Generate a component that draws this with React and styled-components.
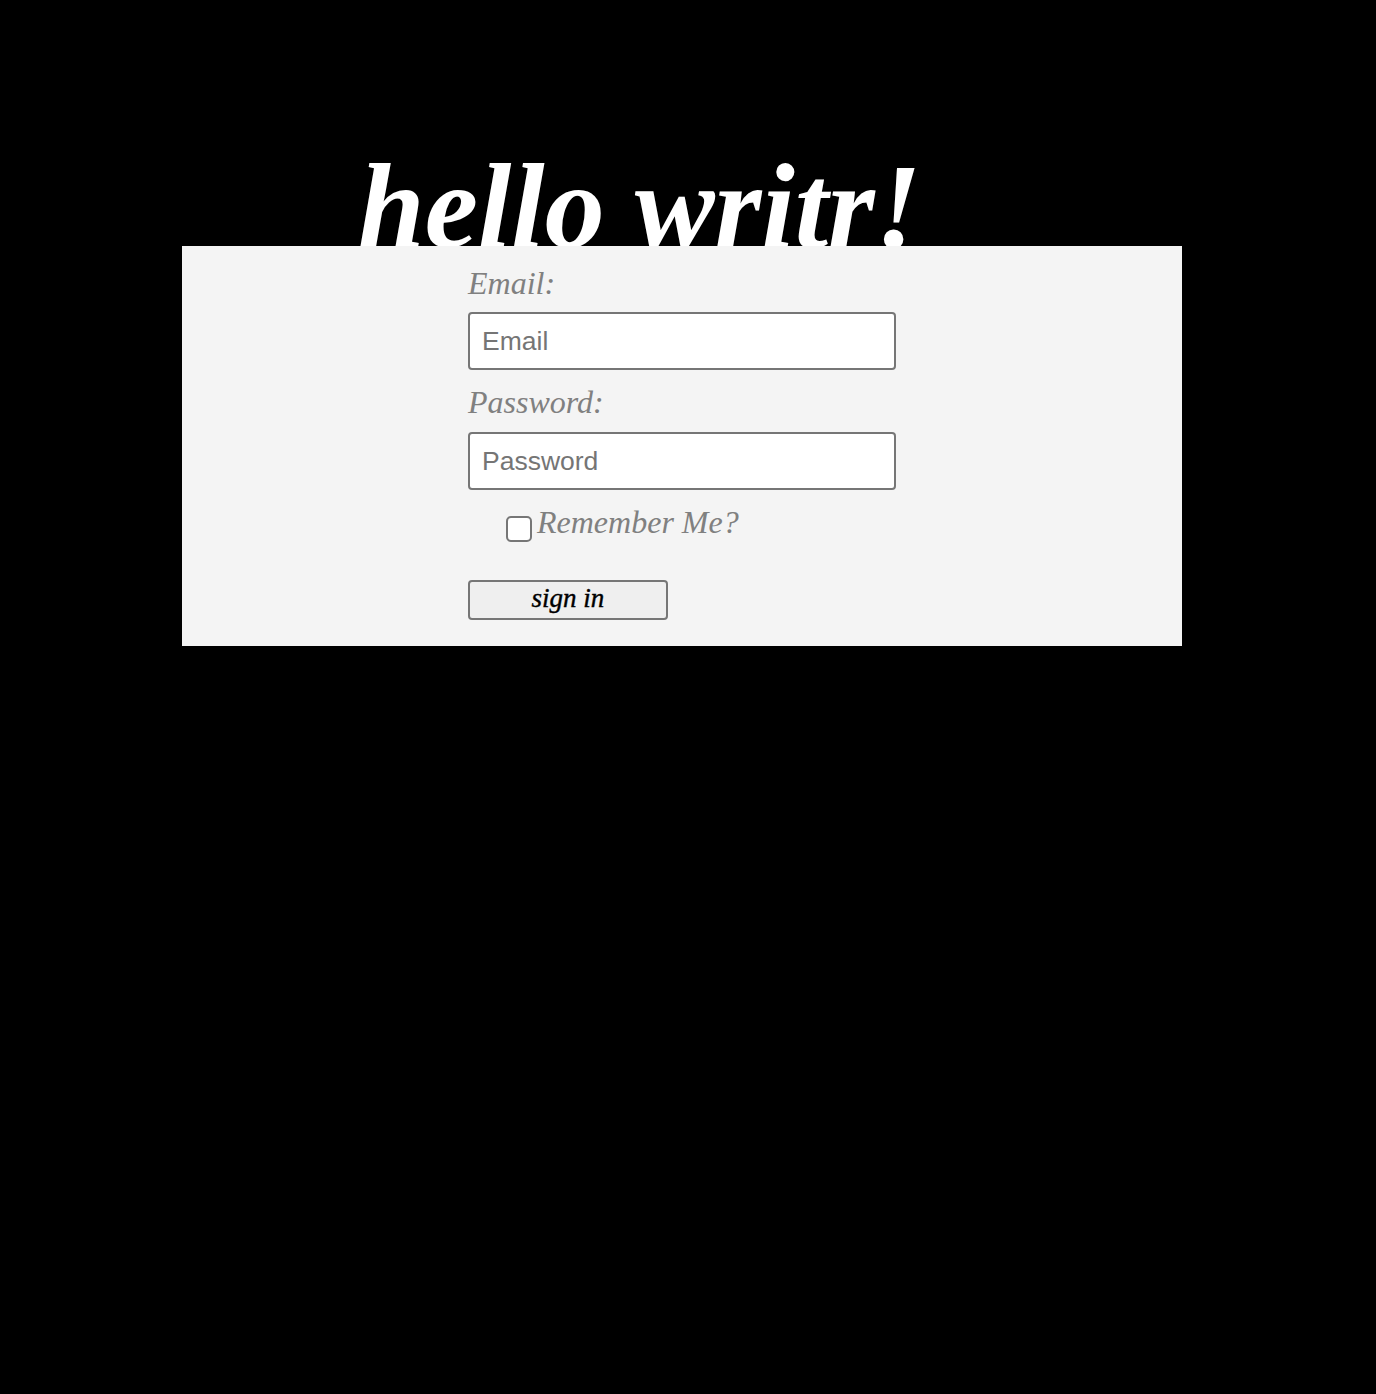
import styled, { createGlobalStyle } from "styled-components";

const GlobalStyle = createGlobalStyle`
  html, body {
    margin: 0;
    background-color: #000;
    min-height: 100%;
  }
  body {
    font-family: "Liberation Serif", serif;
  }
`;

const Page = styled.main`
  min-height: 1394px;
  padding-left: 182px;
  padding-top: 147px;
  box-sizing: border-box;
`;

const Title = styled.h1`
  margin: 0 0 -21px 176px;
  font-family: "Liberation Serif", serif;
  font-style: italic;
  font-weight: bold;
  font-size: 120px;
  line-height: 120px;
  color: #fff;
`;

const Panel = styled.section`
  position: relative;
  width: 1000px;
  height: 400px;
  box-sizing: border-box;
  background-color: #f4f4f4;
  padding: 19px 0 0 286px;
`;

const Form = styled.form`
  display: flex;
  flex-direction: column;
  align-items: flex-start;
`;

const Label = styled.label`
  font-family: "Liberation Serif", serif;
  font-style: italic;
  font-size: 32px;
  line-height: 36px;
  color: #808080;
  margin-top: ${(props) => (props.$first ? "0" : "14px")};
  margin-bottom: ${(props) => (props.$first ? "11px" : "12px")};
`;

const Input = styled.input`
  width: 428px;
  height: 58px;
  box-sizing: border-box;
  border: 2px solid #767676;
  border-radius: 4px;
  background: #fff;
  padding: 0 12px;
  font-family: "Liberation Sans", Arial, sans-serif;
  font-size: 26.5px;
  color: #333;
  outline: none;

  &::placeholder {
    color: #757575;
  }
`;

const RememberRow = styled.div`
  display: flex;
  align-items: flex-start;
  gap: 5px;
  margin: 14px 0 0 38px;
`;

const Checkbox = styled.input`
  appearance: none;
  width: 26px;
  height: 26px;
  margin: 12px 0 0;
  box-sizing: border-box;
  border: 2px solid #767676;
  border-radius: 5px;
  background: #fff;
`;

const RememberText = styled.label`
  font-style: italic;
  font-size: 32px;
  line-height: 36px;
  color: #808080;
`;

const Button = styled.button`
  margin-top: 38px;
  width: 200px;
  height: 40px;
  box-sizing: border-box;
  border: 2px solid #767676;
  border-radius: 4px;
  background-color: #efefef;
  font-family: "Liberation Serif", serif;
  font-style: italic;
  font-size: 27px;
  line-height: 1;
  color: #000;
  padding: 0 0 4px;
  -webkit-text-stroke: 0.4px #000;
`;

export default function App() {
  return (
    <>
      <GlobalStyle />
      <Page>
        <Title>hello writr!</Title>
        <Panel>
          <Form onSubmit={(e) => e.preventDefault()}>
            <Label $first htmlFor="email">Email:</Label>
            <Input id="email" type="email" placeholder="Email" />
            <Label htmlFor="password">Password:</Label>
            <Input id="password" type="password" placeholder="Password" />
            <RememberRow>
              <Checkbox type="checkbox" id="remember" />
              <RememberText htmlFor="remember">Remember Me?</RememberText>
            </RememberRow>
            <Button type="submit">sign in</Button>
          </Form>
        </Panel>
      </Page>
    </>
  );
}
